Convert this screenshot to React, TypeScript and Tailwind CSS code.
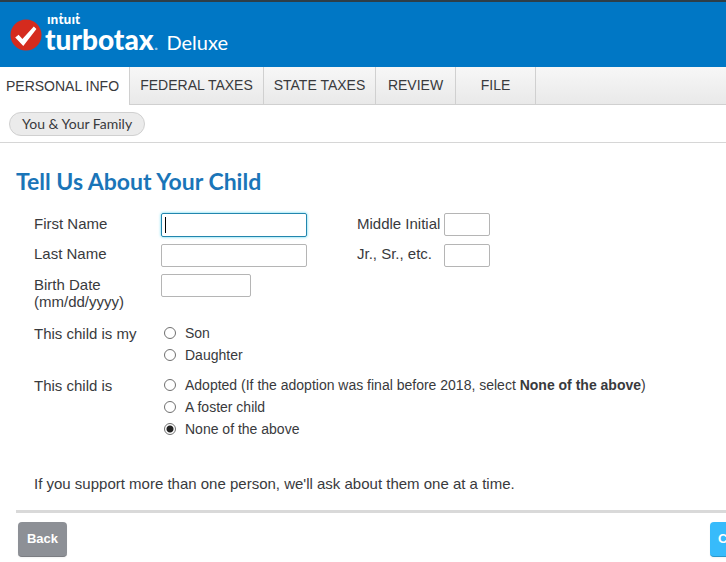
import { useState, type ReactNode } from "react"

export default function App() {
  return (
    <div className="overflow-x-hidden bg-white font-['Liberation_Sans',Arial,sans-serif] text-[15px] leading-[17px] text-[#393a3d]">
      <Header />
      <TabBar />
      <div className="flex h-[38px] items-center border-b border-[#d6d6d6] px-[9px]">
        <a href="#family" className="flex h-6 items-center rounded-full border border-[#d0d0d0] bg-[#ebebeb] px-3 font-['Lato',sans-serif] text-sm">
          You &amp; Your Family
        </a>
      </div>
      <ChildForm />
    </div>
  )
}

function Header() {
  return (
    <header className="flex h-[67px] items-center border-t-2 border-[#2d3e48] bg-[#0077c5] px-[9px] text-white">
      <svg viewBox="0 0 34 34" className="size-[34px]" aria-hidden="true">
        <circle cx="17" cy="17" r="15.5" fill="#d52b1e" />
        <path d="M6.2 19.4 9.6 16.8 13.4 21 24.8 8.4 27.4 11 14.3 28Z" fill="#fff" />
      </svg>
      <div className="ml-0.5 flex flex-col pb-px font-['Lato',sans-serif]">
        <span className="pl-0.5 font-['Noto_Sans',sans-serif] text-[12px] leading-3 font-bold" aria-label="intuit">ınṫuıṫ</span>
        <div className="flex items-baseline leading-[26px]">
          <span className="text-[28px] font-black">turbotax</span>
          <span className="text-[20px] opacity-60">.</span>
          <span className="ml-2 text-[20px]">Deluxe</span>
        </div>
      </div>
    </header>
  )
}

const tabs = [
  { label: "FEDERAL TAXES", width: "w-[134px]" },
  { label: "STATE TAXES", width: "w-[112px]" },
  { label: "REVIEW", width: "w-20" },
  { label: "FILE", width: "w-20" },
]

function TabBar() {
  return (
    <nav className="flex h-[38px] text-sm">
      <a href="#personal" aria-current="page" className="flex w-[129px] shrink-0 items-center pl-1.5">
        PERSONAL INFO
      </a>
      <div className="flex flex-1 border-b border-l border-[#d0d0d0] bg-linear-to-b from-[#f7f7f7] to-[#e9e9e9]">
        {tabs.map((tab) => (
          <a key={tab.label} href="#tab" className={`${tab.width} flex shrink-0 items-center justify-center border-r border-[#d0d0d0] pb-0.5`}>
            {tab.label}
          </a>
        ))}
      </div>
    </nav>
  )
}

function ChildForm() {
  const [relation, setRelation] = useState("")
  const [status, setStatus] = useState("none")

  return (
    <main className="pt-[25px] pb-1.5 pl-4">
      <h1 className="font-['Lato',sans-serif] text-[23px] leading-[26px] font-bold text-[#1a75b8]">Tell Us About Your Child</h1>

      <form className="mt-[19px]" onSubmit={(e) => e.preventDefault()}>
        <div className="pl-[18px]">
          <div className="grid grid-cols-[127px_196px_87px_auto] gap-y-[7px]">
            <label htmlFor="first" className="pt-0.5">First Name</label>
            <div className="relative h-6">
              <input id="first" className="h-6 w-[146px] rounded-xs border border-[#2386ae] px-1 shadow-[0_0_3px_#53d5ef] outline-none" />
              <span className="absolute top-1 left-1 h-4 w-px bg-black" />
            </div>
            <label htmlFor="middle" className="pt-0.5">Middle Initial</label>
            <TextBox id="middle" width="w-[46px]" />

            <label htmlFor="last" className="pt-px">Last Name</label>
            <TextBox id="last" width="w-[146px]" />
            <label htmlFor="suffix" className="pt-px">Jr., Sr., etc.</label>
            <TextBox id="suffix" width="w-[46px]" />

            <label htmlFor="birth" className="pt-0.5">Birth Date<br />(mm/dd/yyyy)</label>
            <TextBox id="birth" width="w-[90px]" />
          </div>

          <RadioGroup title="This child is my" className="mt-3">
            <Option name="relation" checked={relation === "son"} onChange={() => setRelation("son")}>Son</Option>
            <Option name="relation" checked={relation === "daughter"} onChange={() => setRelation("daughter")}>Daughter</Option>
          </RadioGroup>

          <RadioGroup title="This child is" className="mt-2">
            <Option name="status" checked={status === "adopted"} onChange={() => setStatus("adopted")}>
              Adopted (If the adoption was final before 2018, select <b>None of the above</b>)
            </Option>
            <Option name="status" checked={status === "foster"} onChange={() => setStatus("foster")}>A foster child</Option>
            <Option name="status" checked={status === "none"} onChange={() => setStatus("none")}>None of the above</Option>
          </RadioGroup>

          <p className="mt-[35px]">If you support more than one person, we'll ask about them one at a time.</p>
        </div>

        <hr className="mt-[18px] border-t-3 border-[#d9d9d9]" />
        <div className="mt-[9px] -mr-16 flex justify-between pl-0.5">
          <button type="button" className="h-[35px] w-[49px] rounded-sm border-b border-[#7b7d82] bg-[#8d9096] pb-0.5 text-[13px] font-bold text-white shadow-xs">
            Back
          </button>
          <button type="submit" className="h-[35px] w-20 rounded-sm border-b border-[#2998cc] bg-[#37bbfb] px-2 pb-0.5 text-left text-[13px] font-bold text-white shadow-xs">
            Continue
          </button>
        </div>
      </form>
    </main>
  )
}

function TextBox({ id, width }: { id: string; width: string }) {
  return <input id={id} className={`${width} h-[23px] rounded-xs border border-[#b5b5b5] px-1`} />
}

type RadioGroupProps = {
  title: string
  className: string
  children: ReactNode
}

function RadioGroup({ title, className, children }: RadioGroupProps) {
  return (
    <div role="radiogroup" aria-label={title} className={`${className} flex`}>
      <span className="w-[130px] shrink-0 pt-[3px]">{title}</span>
      <div>{children}</div>
    </div>
  )
}

type OptionProps = {
  name: string
  checked: boolean
  onChange: () => void
  children: ReactNode
}

function Option({ name, checked, onChange, children }: OptionProps) {
  return (
    <label className="flex h-[22px] items-center gap-[9px] text-sm whitespace-nowrap">
      <input
        type="radio"
        name={name}
        checked={checked}
        onChange={onChange}
        className="size-3 appearance-none rounded-full border border-[#707070] bg-white checked:bg-[radial-gradient(circle,#222_3px,#fff_4px)]"
      />
      <span>{children}</span>
    </label>
  )
}
